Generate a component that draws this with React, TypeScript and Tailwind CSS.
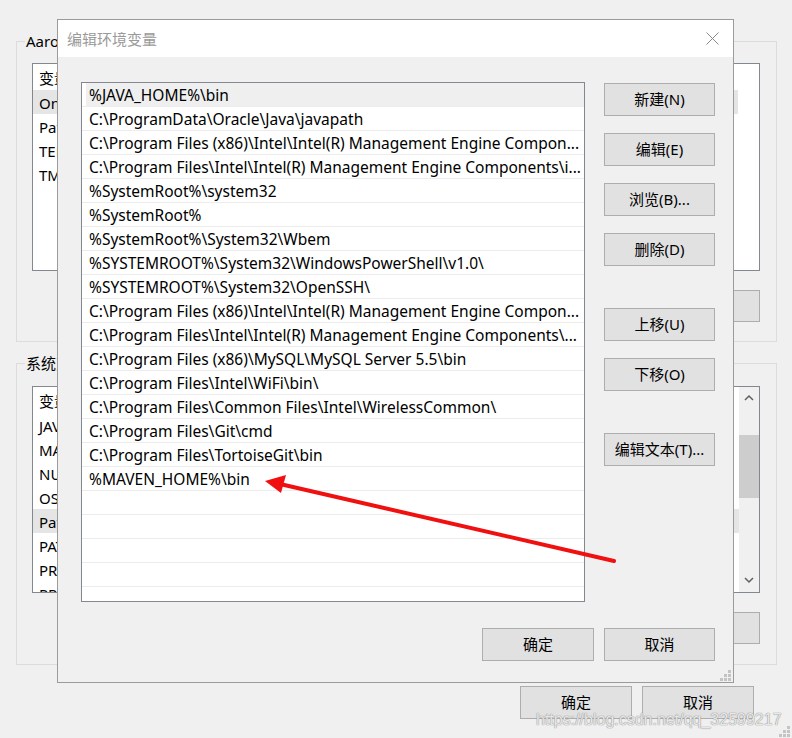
import React from "react";

const paths = [
  "%JAVA_HOME%\\bin",
  "C:\\ProgramData\\Oracle\\Java\\javapath",
  "C:\\Program Files (x86)\\Intel\\Intel(R) Management Engine Compon...",
  "C:\\Program Files\\Intel\\Intel(R) Management Engine Components\\i...",
  "%SystemRoot%\\system32",
  "%SystemRoot%",
  "%SystemRoot%\\System32\\Wbem",
  "%SYSTEMROOT%\\System32\\WindowsPowerShell\\v1.0\\",
  "%SYSTEMROOT%\\System32\\OpenSSH\\",
  "C:\\Program Files (x86)\\Intel\\Intel(R) Management Engine Compon...",
  "C:\\Program Files\\Intel\\Intel(R) Management Engine Components\\...",
  "C:\\Program Files (x86)\\MySQL\\MySQL Server 5.5\\bin",
  "C:\\Program Files\\Intel\\WiFi\\bin\\",
  "C:\\Program Files\\Common Files\\Intel\\WirelessCommon\\",
  "C:\\Program Files\\Git\\cmd",
  "C:\\Program Files\\TortoiseGit\\bin",
  "%MAVEN_HOME%\\bin",
  "",
  "",
  "",
  "",
];

const userVars = ["OneDrive", "Path", "TEMP", "TMP"];
const sysVars = [
  "JAVA_HOME",
  "MAVEN_HOME",
  "NUMBER_OF_PROCESSORS",
  "OS",
  "Path",
  "PATHEXT",
  "PROCESSOR_ARCHITECTURE",
  "PROCESSOR_IDENTIFIER",
];

const Btn = ({ label, w = "w-[111px]", h = "h-[33px]" }: { label: string; w?: string; h?: string }) => (
  <button
    className={`flex ${w} ${h} shrink-0 items-center justify-center border border-[#adadad] bg-[#e1e1e1] text-[15px] text-black`}
  >
    {label}
  </button>
);

const Grip = () => (
  <svg width="12" height="11" viewBox="0 0 12 11">
    <rect x="9" y="0" width="3" height="3" fill="#c4c4c4" />
    <rect x="5" y="4" width="3" height="3" fill="#c4c4c4" />
    <rect x="9" y="4" width="3" height="3" fill="#c4c4c4" />
    <rect x="1" y="8" width="3" height="3" fill="#c4c4c4" />
    <rect x="5" y="8" width="3" height="3" fill="#c4c4c4" />
    <rect x="9" y="8" width="3" height="3" fill="#c4c4c4" />
  </svg>
);

const App = () => {
  return (
    <div className="relative h-[738px] w-[792px] overflow-hidden bg-[#f0f0f0] font-['Noto_Sans','Noto_Sans_CJK_SC',sans-serif] text-[15px] text-black">
      {/* 뒤쪽 환경변수 창 */}
      <div className="flex flex-col pl-[16px] pr-[15px] pt-[41px]">
        <div className="relative h-[301px] border border-[#dcdcdc] pl-[15px] pr-[16px] pt-[21px]">
          <span className="absolute -top-[11px] left-[8px] bg-[#f0f0f0] px-[1px] leading-[20px]">
            Aaron 的用户变量(U)
          </span>
          <div className="h-[208px] border border-[#828790] bg-white">
            <div className="flex h-[26px] w-[705px] items-center pl-[6px] pt-[3px]">
              <span className="w-[180px]">变量</span>
              <span>值</span>
            </div>
            {userVars.map((v, i) => (
              <div
                key={v}
                className={`flex h-[24px] w-[705px] items-center pl-[6px] pt-[2px] ${i === 0 ? "bg-[#e5e5e5]" : ""}`}
              >
                {v}
              </div>
            ))}
          </div>
          <div className="mt-[19px] flex justify-end gap-[10px]">
            <Btn label="新建(N)..." h="h-[32px]" />
            <Btn label="编辑(E)..." h="h-[32px]" />
            <Btn label="删除(D)" h="h-[32px]" />
          </div>
        </div>

        <div className="relative mt-[21px] h-[302px] border border-[#dcdcdc] pl-[15px] pr-[16px] pt-[22px]">
          <span className="absolute -top-[11px] left-[8px] bg-[#f0f0f0] px-[1px] leading-[20px]">
            系统变量(S)
          </span>
          <div className="flex h-[207px] border border-[#828790] bg-white">
            <div className="w-[706px] overflow-hidden">
              <div className="flex h-[26px] items-center pl-[6px] pt-[3px]">
                <span className="w-[180px]">变量</span>
                <span>值</span>
              </div>
              {sysVars.map((v, i) => (
                <div
                  key={v}
                  className={`flex h-[24px] items-center pl-[6px] pt-[2px] ${i === 4 ? "bg-[#e5e5e5]" : ""}`}
                >
                  {v}
                </div>
              ))}
            </div>
            <div className="flex w-[20px] flex-col items-center bg-[#f0f0f0]">
              <svg width="10" height="20" viewBox="0 0 10 20" className="mt-[1px]">
                <path d="M1 12 L5 8 L9 12" fill="none" stroke="#606060" strokeWidth="1.5" />
              </svg>
              <div className="mt-[27px] h-[63px] w-full bg-[#cdcdcd]" />
              <div className="flex-1" />
              <svg width="10" height="20" viewBox="0 0 10 20" className="mb-[2px]">
                <path d="M1 8 L5 12 L9 8" fill="none" stroke="#606060" strokeWidth="1.5" />
              </svg>
            </div>
          </div>
          <div className="mt-[19px] flex justify-end gap-[10px]">
            <Btn label="新建(W)..." h="h-[32px]" />
            <Btn label="编辑(I)..." h="h-[32px]" />
            <Btn label="删除(L)" h="h-[32px]" />
          </div>
        </div>

        <div className="mr-[23px] mt-[21px] flex justify-end gap-[10px]">
          <Btn label="确定" w="w-[112px]" />
          <Btn label="取消" w="w-[112px]" />
        </div>
      </div>
      <div className="absolute bottom-[1px] right-[2px]">
        <Grip />
      </div>

      {/* 편집 대화상자 */}
      <div className="absolute left-[57px] top-[19px] flex h-[664px] w-[677px] flex-col border border-[#9b9b9b] bg-[#f0f0f0]">
        <div className="flex h-[37px] items-center justify-between bg-white pl-[9px] pr-[14px]">
          <span className="pt-[1px] text-[15px] text-[#9a9a9a]">编辑环境变量</span>
          <svg width="13" height="13" viewBox="0 0 13 13">
            <path d="M0.5 0.5 L12.5 12.5 M12.5 0.5 L0.5 12.5" stroke="#8a8a8a" strokeWidth="1" />
          </svg>
        </div>
        <div className="flex flex-1 flex-col pl-[23px] pr-[18px] pt-[25px]">
          <div className="flex gap-[19px]">
            <div className="h-[520px] w-[504px] shrink-0 border border-[#828790] bg-white">
              {paths.map((p, i) => (
                <div key={i} className="h-[24px] border-b border-[#ececec]">
                  <div
                    className={`ml-[4px] flex h-full items-center overflow-hidden whitespace-nowrap pl-[3px] pt-[2px] text-[15.5px] ${
                      i === 0 ? "bg-[#efefef]" : ""
                    }`}
                  >
                    {p}
                  </div>
                </div>
              ))}
            </div>
            <div className="mt-[1px] flex flex-col">
              <Btn label="新建(N)" />
              <div className="mt-[17px]">
                <Btn label="编辑(E)" />
              </div>
              <div className="mt-[17px]">
                <Btn label="浏览(B)..." />
              </div>
              <div className="mt-[17px]">
                <Btn label="删除(D)" />
              </div>
              <div className="mt-[42px]">
                <Btn label="上移(U)" />
              </div>
              <div className="mt-[17px]">
                <Btn label="下移(O)" />
              </div>
              <div className="mt-[42px]">
                <Btn label="编辑文本(T)..." />
              </div>
            </div>
          </div>
          <div className="mt-[26px] flex justify-end gap-[10px]">
            <Btn label="确定" w="w-[112px]" />
            <Btn label="取消" />
          </div>
        </div>
        <div className="absolute bottom-[1px] right-[2px]">
          <Grip />
        </div>
      </div>

      {/* 빨간 화살표 */}
      <svg className="pointer-events-none absolute left-0 top-0" width="792" height="738" viewBox="0 0 792 738">
        <line x1="614" y1="561" x2="280" y2="484" stroke="#f01010" strokeWidth="4" strokeLinecap="round" />
        <polygon points="265,481 286,475 281,493" fill="#f01010" />
      </svg>

      {/* 워터마크 */}
      <span className="pointer-events-none absolute left-[536px] top-[708px] font-['Liberation_Sans',sans-serif] text-[16px] text-white/80 [text-shadow:0_0_1px_#888,0_0_1px_#888]">
        https://blog.csdn.net/qq_32599217
      </span>
    </div>
  );
};

export default App;
